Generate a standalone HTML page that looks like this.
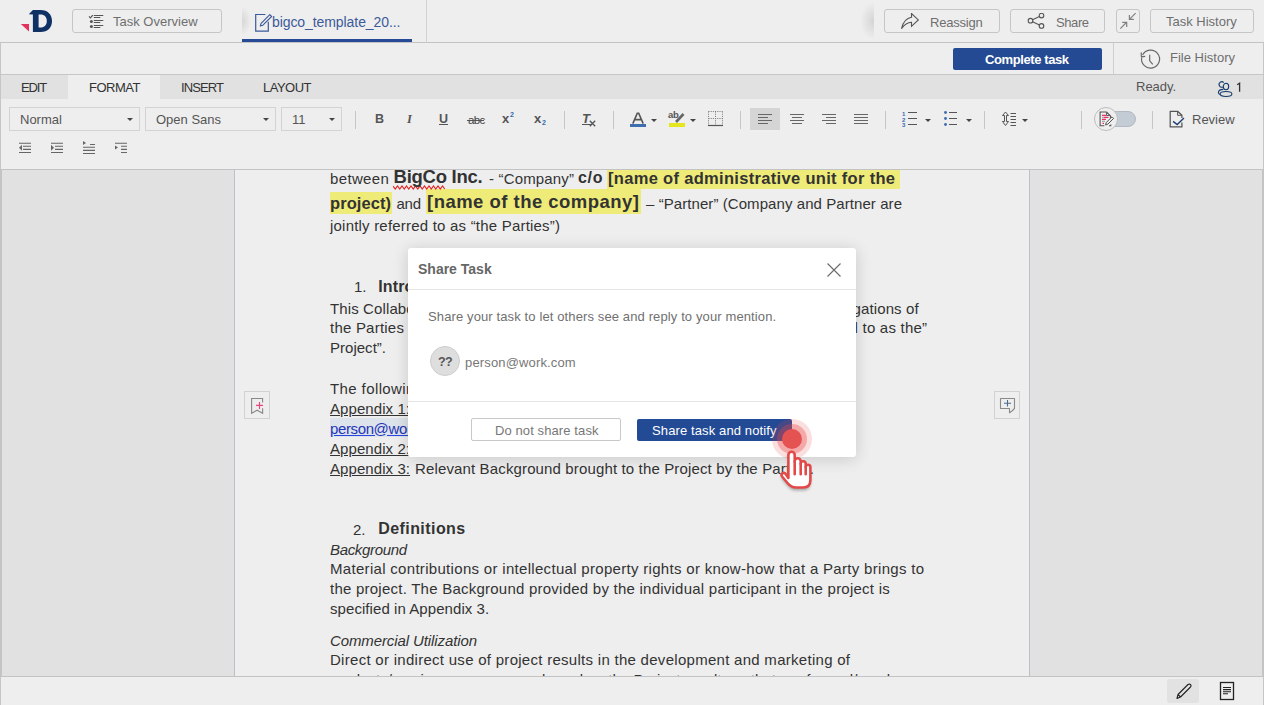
<!DOCTYPE html>
<html><head><meta charset="utf-8"><title>Task</title><style>
*{box-sizing:border-box;margin:0;padding:0}
html,body{width:1264px;height:705px;overflow:hidden;background:#eeeeee;font-family:"Liberation Sans",sans-serif;color:#333}
body{position:relative}
.a{position:absolute}
.hl{background:#c9c9c9}
.btn{position:absolute;border:1px solid #c6c6c6;border-radius:3px;background:#eeeeee}
.ui{position:absolute;white-space:nowrap;font-size:13px;color:#6e6e6e;line-height:16px}
.tab{position:absolute;top:75px;height:24px;font-size:13px;color:#333;line-height:24px;white-space:nowrap}
.dd{position:absolute;top:107px;height:24px;border:1px solid #d3d3d3;background:#eeeeee;font-size:13px;color:#555;line-height:24px;padding-left:10px;white-space:nowrap}
.dd i{position:absolute;right:6px;top:10px;width:0;height:0;border-left:3px solid transparent;border-right:3px solid transparent;border-top:3px solid #444}
.sep{position:absolute;top:111px;width:1px;height:18px;background:#c6c6c6}
.car{position:absolute;width:0;height:0;border-left:3px solid transparent;border-right:3px solid transparent;border-top:3px solid #444;top:119px}
.dt{position:absolute;white-space:nowrap;line-height:1;color:#333}
.ln{position:absolute;left:330px;white-space:nowrap;font-size:15px;line-height:20px;color:#333}
</style></head><body>

<!-- ===== HEADER ===== -->
<div class="a" style="left:0;top:42px;width:1264px;height:1px;background:#c3c3c3"></div>

<!-- logo -->
<svg class="a" style="left:18px;top:8px" width="36" height="28" viewBox="0 0 36 28">
  <path d="M2.8 16 L11 16 L11 23.5 Z" fill="#e0325a"/>
  <path fill-rule="evenodd" d="M10.8 6.2 L14.9 2 L22.5 2 C30 2 34 6.8 34 13 C34 19.5 30 24 22.5 24 L14.9 24 L14.9 6.4 Z M20.6 6.4 L22.5 6.4 C26.5 6.4 28.8 9 28.8 12.9 C28.8 16.8 26.5 19.4 22.5 19.4 L20.6 19.4 Z" fill="#0f3163"/>
</svg>

<!-- Task overview -->
<div class="btn" style="left:72px;top:9px;width:150px;height:24px"></div>
<svg class="a" style="left:84px;top:10px" width="24" height="22" viewBox="0 0 24 22">
  <path d="M5 6.4 L6.4 7.8 L8.8 5.1" stroke="#555" stroke-width="1.2" fill="none"/>
  <circle cx="7.4" cy="11.6" r="1.5" fill="#555"/><circle cx="7.4" cy="16.6" r="1.5" fill="#555"/>
  <path d="M10.2 5.5 L18.9 5.5 M10.2 10.5 L18.9 10.5 M10.2 15.5 L18.9 15.5 M10.2 7.5 L15.9 7.5 M10.2 12.5 L15.9 12.5 M10.2 17.5 L15.9 17.5" stroke="#555" stroke-width="1.05" stroke-linecap="round"/>
</svg>
<div class="ui" style="left:113px;top:14px">Task Overview</div>

<!-- active doc tab -->
<div class="a" style="left:242px;top:0;width:20px;height:42px;background:radial-gradient(9px 15px at 0px 21px,rgba(0,0,0,0.1),rgba(0,0,0,0))"></div>
<svg class="a" style="left:254px;top:13px" width="20" height="20" viewBox="0 0 20 20">
  <path d="M11.4 1.5 L1.7 1.5 L1.7 18.2 L14.3 18.2 L14.3 8.8" stroke="#3b5a9a" stroke-width="1.2" fill="none"/>
  <path d="M6.3 13 L7.1 10.4 L15.8 1.7 L17.6 3.5 L8.9 12.2 Z" stroke="#3b5a9a" stroke-width="1.1" fill="none" stroke-linejoin="round"/>
</svg>
<div class="ui" style="left:272px;top:14px;color:#3b5a9a;font-size:14px;letter-spacing:-0.08px">bigco_template_20...</div>
<div class="a" style="left:242px;top:39px;width:170px;height:3px;background:#264a95"></div>
<div class="a" style="left:426px;top:0;width:1px;height:42px;background:#d2d2d2"></div>

<!-- right header section -->
<div class="a" style="left:850px;top:0;width:24px;height:42px;background:radial-gradient(14px 19px at 24px 21px,rgba(0,0,0,0.11),rgba(0,0,0,0))"></div>
<div class="btn" style="left:884px;top:9px;width:116px;height:24px"></div>
<svg class="a" style="left:900px;top:13px" width="20" height="17" viewBox="0 0 20 17">
  <path d="M1.5 15.6 C3 9 6.5 5 11.5 4.2 L11.5 0.5 L18.3 6.9 L11.5 13.3 L11.5 9.3 C7.5 9.5 4.5 11.5 1.5 15.6 Z" stroke="#555" stroke-width="1.1" fill="none" stroke-linejoin="miter"/>
</svg>
<div class="ui" style="left:930px;top:15px;letter-spacing:-0.2px">Reassign</div>

<div class="btn" style="left:1010px;top:9px;width:95px;height:24px"></div>
<svg class="a" style="left:1027px;top:13px" width="18" height="17" viewBox="0 0 18 17">
  <circle cx="3.5" cy="7.7" r="2.3" stroke="#555" stroke-width="1.1" fill="none"/>
  <circle cx="14.5" cy="2.6" r="2.3" stroke="#555" stroke-width="1.1" fill="none"/>
  <circle cx="14.5" cy="12.9" r="2.3" stroke="#555" stroke-width="1.1" fill="none"/>
  <path d="M5.6 6.7 L12.4 3.6 M5.6 8.8 L12.4 11.9" stroke="#555" stroke-width="1.1"/>
</svg>
<div class="ui" style="left:1056px;top:15px;letter-spacing:-0.4px">Share</div>

<div class="btn" style="left:1116px;top:9px;width:24px;height:24px"></div>
<svg class="a" style="left:1119px;top:12px" width="18" height="18" viewBox="0 0 18 18">
  <path d="M1.3 16.6 L7.7 10.3 M3.2 10.4 L7.7 10.4 L7.7 14.9 M16.6 1.1 L10.4 7.4 M10.4 2.9 L10.4 7.4 L14.9 7.4" stroke="#808080" stroke-width="1.2" fill="none"/>
</svg>

<div class="btn" style="left:1150px;top:9px;width:104px;height:24px"></div>
<div class="ui" style="left:1166px;top:14px">Task History</div>

<!-- ===== ROW 2 ===== -->
<div class="a" style="left:0;top:43px;width:1px;height:662px;background:#c6c6c6"></div>
<div class="a" style="left:1263px;top:43px;width:1px;height:662px;background:#c6c6c6"></div>
<div class="a" style="left:953px;top:48px;width:149px;height:22px;background:#244a93;border-radius:2px"></div>
<div class="ui" style="left:985px;top:52px;color:#fff;font-weight:bold;font-size:13px;letter-spacing:-0.4px">Complete task</div>
<div class="a" style="left:1113px;top:43px;width:1px;height:31px;background:#cfcfcf"></div>
<svg class="a" style="left:1138px;top:47px" width="24" height="24" viewBox="0 0 24 24">
  <path d="M4.6 7.9 A9 9 0 1 1 3.7 10.5" stroke="#666" stroke-width="1.15" fill="none"/>
  <path d="M3.2 5.4 L3.4 9.9 L7.2 9.4" stroke="#666" stroke-width="1.15" fill="none"/>
  <path d="M11.7 7.7 L11.7 13.8 L14.8 17.3" stroke="#666" stroke-width="1.15" fill="none"/>
</svg>
<div class="ui" style="left:1170px;top:50px">File History</div>
<div class="a" style="left:0;top:74px;width:1264px;height:1px;background:#c6c6c6"></div>

<!-- ===== TABS ROW ===== -->
<div class="a" style="left:1px;top:75px;width:1262px;height:24px;background:#e1e1e1"></div>
<div class="a" style="left:68px;top:75px;width:92px;height:24px;background:#eeeeee"></div>
<div class="tab" style="left:21px;top:76px;letter-spacing:-1.1px">EDIT</div>
<div class="tab" style="left:89px;top:76px;letter-spacing:-0.5px">FORMAT</div>
<div class="tab" style="left:181px;top:76px;letter-spacing:-0.9px">INSERT</div>
<div class="tab" style="left:263px;top:76px;letter-spacing:-0.5px">LAYOUT</div>
<div class="tab" style="left:1136px;color:#555">Ready.</div>
<svg class="a" style="left:1215px;top:80px" width="28" height="18" viewBox="0 0 28 18">
  <ellipse cx="11" cy="6.5" rx="2.7" ry="3.2" stroke="#143c6a" stroke-width="1.1" fill="none"/>
  <ellipse cx="11" cy="14" rx="5.9" ry="2.5" stroke="#143c6a" stroke-width="1.1" fill="none"/>
  <path d="M8.7 2.6 A2.7 2.7 0 1 0 8 6.9" stroke="#143c6a" stroke-width="1.1" fill="none"/>
  <path d="M8.3 9.4 C5.5 9.6 3.4 10.6 3.4 12.4 C3.4 13.4 4 14 5.3 14.6" stroke="#143c6a" stroke-width="1.1" fill="none"/>
  <path d="M22.2 4.8 L24.6 3.2 L24.6 11.8" stroke="#333" stroke-width="1.3" fill="none"/>
</svg>


<!-- ===== TOOLBAR ===== -->
<div class="dd" style="left:9px;width:131px">Normal<i></i></div>
<div class="dd" style="left:145px;width:131px">Open Sans<i></i></div>
<div class="dd" style="left:281px;width:61px">11<i></i></div>

<!-- separators -->
<div class="sep" style="left:355px"></div>
<div class="sep" style="left:564px"></div>
<div class="sep" style="left:613px"></div>
<div class="sep" style="left:740px"></div>
<div class="sep" style="left:885px"></div>
<div class="sep" style="left:984px"></div>
<div class="sep" style="left:1081px"></div>
<div class="sep" style="left:1152px"></div>
<!-- B I U abc x2 x2 -->
<div class="a" style="left:375px;top:111px;font:bold 12.5px/16px 'Liberation Sans',sans-serif;color:#555">B</div>
<div class="a" style="left:407px;top:111px;font:bold italic 12.5px/16px 'Liberation Serif',serif;color:#555">I</div>
<div class="a" style="left:439px;top:111px;font:bold 12.5px/16px 'Liberation Sans',sans-serif;color:#555;text-decoration:underline">U</div>
<div class="a" style="left:468px;top:112px;font:11.5px/16px 'Liberation Sans',sans-serif;color:#444;letter-spacing:-0.6px">abc</div>
<div class="a" style="left:467px;top:120px;width:17px;height:1px;background:#555"></div>
<div class="a" style="left:502px;top:111px;font:bold 13px/16px 'Liberation Sans',sans-serif;color:#555">x</div>
<div class="a" style="left:510px;top:110px;font:bold 7px/10px 'Liberation Sans',sans-serif;color:#3a6ab0">2</div>
<div class="a" style="left:534px;top:111px;font:bold 13px/16px 'Liberation Sans',sans-serif;color:#555">x</div>
<div class="a" style="left:542px;top:118px;font:bold 7px/10px 'Liberation Sans',sans-serif;color:#3a6ab0">2</div>
<!-- Tx -->
<div class="a" style="left:582px;top:111px;font:bold italic 13px/16px 'Liberation Sans',sans-serif;color:#555">T</div>
<div class="a" style="left:582px;top:124px;width:9px;height:1px;background:#555"></div>
<svg class="a" style="left:589px;top:120px" width="7" height="7" viewBox="0 0 7 7"><path d="M0.8 0.8 L6.2 6.2 M6.2 0.8 L0.8 6.2" stroke="#555" stroke-width="1.3"/></svg>
<!-- font color A -->
<svg class="a" style="left:629px;top:112px" width="18" height="16" viewBox="0 0 18 16">
  <path d="M3.8 11.6 L8.3 1.2 L9.7 1.2 L14.2 11.6 M5.6 7.6 L12.4 7.6" stroke="#555" stroke-width="1.6" fill="none"/>
  <rect x="1" y="12" width="16" height="3" fill="#3d6eaf"/>
</svg>
<div class="car" style="left:651px"></div>
<!-- highlight -->
<svg class="a" style="left:668px;top:111px" width="18" height="17" viewBox="0 0 18 17">
  
  <path d="M8 11 L15.5 3" stroke="#666" stroke-width="2.6"/>
  <rect x="1" y="12" width="16" height="4" fill="#e6e61c"/>
</svg>
<div class="a" style="left:668px;top:110px;font:bold 9.5px/10px 'Liberation Sans',sans-serif;color:#555;letter-spacing:-0.3px">ab</div>
<div class="car" style="left:690px"></div>
<!-- borders -->
<svg class="a" style="left:707px;top:110px" width="17" height="17" viewBox="0 0 17 17">
  <path d="M1.5 1.5 L15.5 1.5 M1.5 1.5 L1.5 15 M15.5 1.5 L15.5 15 M8.5 1.5 L8.5 15 M1.5 8.5 L15.5 8.5" stroke="#777" stroke-width="1" stroke-dasharray="1 1.2" fill="none"/>
  <path d="M1 15.5 L16 15.5" stroke="#555" stroke-width="1.2"/>
</svg>
<!-- align -->
<div class="a" style="left:750px;top:108px;width:30px;height:22px;background:#d5d5d5"></div>
<svg class="a" style="left:757px;top:113px" width="16" height="12" viewBox="0 0 16 12">
  <path d="M1 1.5 L15 1.5 M1 4.5 L11 4.5 M1 7.5 L15 7.5 M1 10.5 L11 10.5" stroke="#666" stroke-width="1.1"/>
</svg>
<svg class="a" style="left:789px;top:113px" width="16" height="12" viewBox="0 0 16 12">
  <path d="M1 1.5 L15 1.5 M3 4.5 L13 4.5 M1 7.5 L15 7.5 M3 10.5 L13 10.5" stroke="#666" stroke-width="1.1"/>
</svg>
<svg class="a" style="left:821px;top:113px" width="16" height="12" viewBox="0 0 16 12">
  <path d="M1 1.5 L15 1.5 M5 4.5 L15 4.5 M1 7.5 L15 7.5 M5 10.5 L15 10.5" stroke="#666" stroke-width="1.1"/>
</svg>
<svg class="a" style="left:853px;top:113px" width="16" height="12" viewBox="0 0 16 12">
  <path d="M1 1.5 L15 1.5 M1 4.5 L15 4.5 M1 7.5 L15 7.5 M1 10.5 L15 10.5" stroke="#666" stroke-width="1.1"/>
</svg>
<!-- numbered list -->
<svg class="a" style="left:901px;top:110px" width="18" height="17" viewBox="0 0 18 17">
  <text x="1" y="6" style="font-family:'Liberation Sans',sans-serif;font-size:6px;font-weight:bold" fill="#3a6ab0">1</text>
  <text x="1" y="11.5" style="font-family:'Liberation Sans',sans-serif;font-size:6px;font-weight:bold" fill="#3a6ab0">2</text>
  <text x="1" y="17" style="font-family:'Liberation Sans',sans-serif;font-size:6px;font-weight:bold" fill="#3a6ab0">3</text>
  <path d="M7 2.5 L16 2.5 M7 8.5 L16 8.5 M7 14.5 L16 14.5" stroke="#555" stroke-width="1.1"/>
</svg>
<div class="car" style="left:925px"></div>
<!-- bullet list -->
<svg class="a" style="left:943px;top:110px" width="16" height="17" viewBox="0 0 16 17">
  <circle cx="2.5" cy="2.5" r="1.4" fill="#3a6ab0"/><circle cx="2.5" cy="8.5" r="1.4" fill="#3a6ab0"/><circle cx="2.5" cy="14.5" r="1.4" fill="#3a6ab0"/>
  <path d="M6 2.5 L14 2.5 M6 8.5 L14 8.5 M6 14.5 L14 14.5" stroke="#555" stroke-width="1.1"/>
</svg>
<div class="car" style="left:966px"></div>
<!-- line spacing -->
<svg class="a" style="left:1001px;top:111px" width="17" height="16" viewBox="0 0 17 16">
  <path d="M4.5 1 L1.5 4.5 L3.5 4.5 L3.5 10.5 L1.5 10.5 L4.5 14.5 L7.5 10.5 L5.5 10.5 L5.5 4.5 L7.5 4.5 Z" stroke="#555" stroke-width="1" fill="none"/>
  <path d="M9.5 2.5 L15 2.5 M9.5 5.5 L15 5.5 M9.5 8.5 L15 8.5 M9.5 11.5 L15 11.5 M9.5 14.5 L15 14.5" stroke="#555" stroke-width="1"/>
</svg>
<div class="car" style="left:1022px"></div>
<!-- track changes toggle -->
<div class="a" style="left:1100px;top:111px;width:36px;height:16px;border-radius:8px;background:#c3cbd4;border:1px solid #b3b9c0"></div>
<div class="a" style="left:1094px;top:107px;width:24px;height:24px;border-radius:12px;background:#eeeeee;border:1px solid #bdbdbd"></div>
<svg class="a" style="left:1098px;top:110px" width="18" height="18" viewBox="0 0 18 18">
  <path d="M8.5 2 L2.1 2 L2.1 15.8 L6.3 15.8 M8.5 2 L12.5 6 L12.5 8 M11 15.8 L12.8 15.8 L12.8 14.5" stroke="#555" stroke-width="1.1" fill="none"/>
  <path d="M8.5 2.5 L8.5 5.5 L11.5 5.5" stroke="#555" stroke-width="0.9" fill="none"/>
  <path d="M4 5.3 L8 5.3 M6 7.3 L10.5 7.3 M4 9.3 L8 9.3 M4.5 13.4 L6 13.4" stroke="#e8336a" stroke-width="1.2"/>
  <path d="M4 7.3 L6 7.3 M4 11.3 L7 11.3" stroke="#999" stroke-width="1"/>
  <path d="M7.6 15 L8.2 12.6 L14 6.8 L15.6 8.4 L9.8 14.2 Z" stroke="#555" stroke-width="1" fill="#eee"/>
</svg>
<!-- review -->
<svg class="a" style="left:1168px;top:109px" width="18" height="20" viewBox="0 0 18 20">
  <path d="M13.9 9 L13.9 6.3 L9.6 2.3 L2.2 2.3 L2.2 17.9 L13.9 17.9 L13.9 13.5" stroke="#555" stroke-width="1.25" fill="none" stroke-linejoin="round"/>
  <path d="M9.6 2.6 L9.6 6.3 L13.6 6.3" stroke="#555" stroke-width="1" fill="none"/>
  <path d="M5.1 12.4 L9.2 15.6 L16 9.1" stroke="#1d3f73" stroke-width="1.35" fill="none"/>
</svg>
<div class="ui" style="left:1192px;top:112px;font-size:13px;color:#555">Review</div>
<!-- row 2 indent icons -->
<svg class="a" style="left:18px;top:142px" width="14" height="12" viewBox="0 0 14 12">
  <path d="M1 1.2 L13 1.2 M5 4.3 L13 4.3 M5 7.4 L13 7.4 M1 10.5 L13 10.5" stroke="#666" stroke-width="1.1"/>
  <path d="M4 2.8 L1 5.8 L4 8.8 Z" fill="#666"/>
</svg>
<svg class="a" style="left:50px;top:142px" width="14" height="12" viewBox="0 0 14 12">
  <path d="M1 1.2 L13 1.2 M5 4.3 L13 4.3 M5 7.4 L13 7.4 M1 10.5 L13 10.5" stroke="#666" stroke-width="1.1"/>
  <path d="M1 2.8 L4 5.8 L1 8.8 Z" fill="#666"/>
</svg>
<svg class="a" style="left:82px;top:140px" width="14" height="15" viewBox="0 0 14 15">
  <path d="M8 4.5 L13 4.5 M1 7.3 L13 7.3 M1 10.4 L13 10.4 M1 13.5 L13 13.5" stroke="#666" stroke-width="1.1"/>
  <path d="M1 1 L4 3 L1 5 Z" fill="#666"/>
</svg>
<svg class="a" style="left:114px;top:142px" width="14" height="12" viewBox="0 0 14 12">
  <path d="M1 1.2 L13 1.2 M7 4.3 L13 4.3 M7 7.4 L13 7.4 M7 10.5 L13 10.5" stroke="#666" stroke-width="1.1"/>
  <path d="M1 3.5 L4 5.5 L1 7.5 Z" fill="#666"/>
</svg>


<div class="a" style="left:0;top:169px;width:1264px;height:1px;background:#c3c3c3"></div>

<!-- ===== DOC AREA ===== -->
<div class="a" style="left:1px;top:170px;width:1262px;height:506px;background:#e1e1e1"></div>
<div class="a" style="left:0;top:170px;width:2px;height:506px;background:#c4c4c4"></div>
<div class="a" style="left:1262px;top:170px;width:2px;height:506px;background:#c4c4c4"></div>
<div class="a" style="left:234px;top:170px;width:796px;height:506px;background:#eeeeee;border-left:1px solid #b7c2cb;border-right:1px solid #b7c2cb"></div>

<div class="a" style="left:234px;top:170px;width:796px;height:506px;overflow:hidden">
<div class="a" style="left:372.7px;top:0;width:293.3px;height:19px;background:#efeb78"></div>
<div class="a" style="left:96px;top:22px;width:62px;height:21.7px;background:#efeb78"></div>
<div class="a" style="left:192px;top:19px;width:215px;height:24.7px;background:#efeb78"></div>
<div class="a" style="left:96px;top:248px;width:100px;height:19px;background:#dde3ea"></div>
<svg class="a" style="left:159px;top:15px" width="54" height="6" viewBox="0 0 54 6"><path d="M0 1 L0.00 1 L2.25 4 L4.50 1 L6.75 4 L9.00 1 L11.25 4 L13.50 1 L15.75 4 L18.00 1 L20.25 4 L22.50 1 L24.75 4 L27.00 1 L29.25 4 L31.50 1 L33.75 4 L36.00 1 L38.25 4 L40.50 1 L42.75 4 L45.00 1 L47.25 4 L49.50 1 L51.75 4" stroke="#e02424" stroke-width="1.2" fill="none"/></svg>
<div style="position:absolute;left:-234px;top:-170px;width:1264px;height:705px">
<!--DOCTEXT-->
<div class="dt" style="left:330.0px;top:171.0px;font-size:15px;letter-spacing:0.348px;">between</div>
<div class="dt" style="left:393.6px;top:168.0px;font-size:18.5px;font-weight:bold;letter-spacing:-0.274px;">BigCo Inc.</div>
<div class="dt" style="left:489.0px;top:171.0px;font-size:15px;letter-spacing:0.165px;">- “Company”</div>
<div class="dt" style="left:578.0px;top:170.2px;font-size:16px;font-weight:bold;letter-spacing:0.691px;">c/o</div>
<div class="dt" style="left:608.0px;top:169.7px;font-size:16.5px;font-weight:bold;letter-spacing:0.316px;">[name of administrative unit for the</div>
<div class="dt" style="left:330.0px;top:194.7px;font-size:16.5px;font-weight:bold;letter-spacing:0.071px;">project)</div>
<div class="dt" style="left:396.4px;top:196.0px;font-size:15px;letter-spacing:-0.213px;">and</div>
<div class="dt" style="left:427.0px;top:193.0px;font-size:18.5px;font-weight:bold;letter-spacing:0.475px;">[name of the company]</div>
<div class="dt" style="left:646.0px;top:196.0px;font-size:15px;letter-spacing:0.073px;">– “Partner” (Company and Partner are</div>
<div class="dt" style="left:330.0px;top:217.9px;font-size:15px;letter-spacing:0.206px;">jointly referred to as “the Parties”)</div>
<div class="dt" style="left:354.0px;top:279.3px;font-size:15px;letter-spacing:0.000px;">1.</div>
<div class="dt" style="left:378.2px;top:278.5px;font-size:16px;font-weight:bold;letter-spacing:0.153px;">Introduction</div>
<div class="dt" style="left:330.0px;top:300.6px;font-size:15px;letter-spacing:0.116px;">This Collaboration Agreement (“Agreement”) sets out the basic rights and obligations of</div>
<div class="dt" style="left:330.0px;top:320.4px;font-size:15px;letter-spacing:0.218px;">the Parties in relation to the project [name of the project] (hereinafter referred to as the”</div>
<div class="dt" style="left:330.0px;top:340.3px;font-size:15px;letter-spacing:0.019px;">Project”.</div>
<div class="dt" style="left:330.0px;top:380.7px;font-size:15px;letter-spacing:0.397px;">The following appendices form part of this Agreement:</div>
<div class="dt" style="left:330.0px;top:400.7px;font-size:15px;letter-spacing:0.077px;text-decoration:underline">Appendix 1:</div>
<div class="dt" style="left:330.0px;top:420.5px;font-size:15px;letter-spacing:-0.376px;color:#2436b8;text-decoration:underline;text-decoration-color:#2a45e0">person@work.com</div>
<div class="dt" style="left:330.0px;top:440.7px;font-size:15px;letter-spacing:0.077px;text-decoration:underline">Appendix 2:</div>
<div class="dt" style="left:330.0px;top:460.7px;font-size:15px;letter-spacing:0.077px;text-decoration:underline">Appendix 3:</div>
<div class="dt" style="left:415.0px;top:460.7px;font-size:15px;letter-spacing:0.139px;">Relevant Background brought to the Project by the Parties.</div>
<div class="dt" style="left:353.0px;top:522.0px;font-size:15px;letter-spacing:0.000px;">2.</div>
<div class="dt" style="left:378.2px;top:521.2px;font-size:16px;font-weight:bold;letter-spacing:0.434px;">Definitions</div>
<div class="dt" style="left:330.0px;top:541.8px;font-size:15px;font-style:italic;letter-spacing:-0.339px;">Background</div>
<div class="dt" style="left:330.0px;top:561.1px;font-size:15px;letter-spacing:0.308px;">Material contributions or intellectual property rights or know-how that a Party brings to</div>
<div class="dt" style="left:330.0px;top:580.9px;font-size:15px;letter-spacing:0.237px;">the project. The Background provided by the individual participant in the project is</div>
<div class="dt" style="left:330.0px;top:600.8px;font-size:15px;letter-spacing:0.068px;">specified in Appendix 3.</div>
<div class="dt" style="left:330.0px;top:632.5px;font-size:15px;font-style:italic;letter-spacing:-0.105px;">Commercial Utilization</div>
<div class="dt" style="left:330.0px;top:652.0px;font-size:15px;letter-spacing:0.282px;">Direct or indirect use of project results in the development and marketing of</div>
<div class="dt" style="left:330.0px;top:672.0px;font-size:15px;letter-spacing:0.037px;">products/services or processes based on the Project results or that are formed/used</div>
<!--/DOCTEXT--></div>
</div>
<!-- bookmark / comment buttons -->
<div class="a" style="left:244px;top:391px;width:26px;height:28px;border:1px solid #d2d2d2"></div>
<svg class="a" style="left:248px;top:396px" width="16" height="20" viewBox="0 0 16 20">
  <path d="M14.6 6.5 L14.6 2.5 L3.6 2.5 L3.6 17.3 L9.1 14.2 L14.6 17.3 L14.6 12.3" stroke="#8a8a8a" stroke-width="1.15" fill="none"/>
  <path d="M8 9.4 L15 9.4 M11.5 5.9 L11.5 12.9" stroke="#e8457a" stroke-width="1.15"/>
</svg>
<div class="a" style="left:994px;top:391px;width:26px;height:28px;border:1px solid #d2d2d2"></div>
<svg class="a" style="left:999px;top:397px" width="17" height="17" viewBox="0 0 17 17">
  <path d="M1.5 1.5 L15.5 1.5 L15.5 11.5 L13 14 L10.5 15.8 L10.5 11.5 L1.5 11.5 Z" stroke="#8a8a8a" stroke-width="1.1" fill="none" stroke-linejoin="round"/>
  <path d="M5 6.3 L12 6.3 M8.5 3 L8.5 9.5" stroke="#4a6a94" stroke-width="1.1"/>
</svg>
<!-- status bar icons -->
<div class="a" style="left:1167px;top:679px;width:32px;height:24px;border-radius:3px;background:#e2e2e2"></div>
<svg class="a" style="left:1175px;top:683px" width="18" height="17" viewBox="0 0 18 17">
  <path d="M2 15.5 L3 11.5 L13 1.5 Q14.5 0.6 15.6 1.6 Q16.5 2.7 15.5 4 L5.5 14 Z M3 11.5 L5.5 14" stroke="#222" stroke-width="1.1" fill="none" stroke-linejoin="round"/>
</svg>
<svg class="a" style="left:1219px;top:681px" width="16" height="20" viewBox="0 0 16 20">
  <rect x="1.5" y="1.5" width="13" height="17" stroke="#222" stroke-width="1.3" fill="none"/>
  <path d="M4 6.5 L12 6.5 M4 8.6 L12 8.6 M4 10.7 L12 10.7 M4 12.8 L9 12.8" stroke="#222" stroke-width="1.1"/>
</svg>


<!-- ===== STATUS BAR ===== -->
<div class="a" style="left:0;top:676px;width:1264px;height:1px;background:#c3c3c3"></div>

<!-- ===== MODAL ===== -->
<div class="a" style="left:408px;top:248px;width:448px;height:209px;background:#fff;border-radius:3px;box-shadow:0 2px 16px rgba(0,0,0,0.16)"></div>
<div class="ui" style="left:418px;top:261px;font-weight:bold;font-size:14px;color:#666">Share Task</div>
<svg class="a" style="left:826px;top:262px" width="16" height="16" viewBox="0 0 16 16"><path d="M1.5 1.5 L14.5 14.5 M14.5 1.5 L1.5 14.5" stroke="#6e6e6e" stroke-width="1.2"/></svg>
<div class="a" style="left:408px;top:289px;width:448px;height:1px;background:#e6e6e6"></div>
<div class="ui" style="left:428px;top:309px;font-size:13px;color:#707070;letter-spacing:0.12px">Share your task to let others see and reply to your mention.</div>
<div class="a" style="left:430px;top:346px;width:30px;height:30px;border-radius:15px;background:#dedede;border:1px solid #cdcdcd"></div>
<div class="ui" style="left:438px;top:354px;font-weight:bold;font-size:12.5px;color:#555;letter-spacing:-0.6px">??</div>
<div class="ui" style="left:465px;top:355px;font-size:13px;color:#777;letter-spacing:0.15px">person@work.com</div>
<div class="a" style="left:408px;top:401px;width:448px;height:1px;background:#e6e6e6"></div>
<div class="a" style="left:471px;top:418px;width:150px;height:23px;border:1px solid #c8c8c8;border-radius:2px;background:#fff"></div>
<div class="ui" style="left:495px;top:423px;font-size:13px;color:#777;letter-spacing:0.1px">Do not share task</div>
<div class="a" style="left:637px;top:419px;width:155px;height:22px;background:#234a94;border-radius:2px"></div>
<div class="ui" style="left:652px;top:423px;font-size:13px;color:#fff;letter-spacing:0.12px">Share task and notify</div>
<!-- click ripple -->
<div class="a" style="left:772px;top:419px;width:40px;height:40px;border-radius:20px;background:rgba(232,70,70,0.18)"></div>
<div class="a" style="left:777px;top:424px;width:30px;height:30px;border-radius:15px;background:rgba(232,70,70,0.35)"></div>
<div class="a" style="left:782px;top:429px;width:20px;height:20px;border-radius:10px;background:#e55252"></div>
<!-- hand cursor -->
<svg class="a" style="left:776px;top:446px" width="44" height="50" viewBox="0 0 44 50">
  <defs><filter id="hs" x="-30%" y="-30%" width="160%" height="160%"><feGaussianBlur stdDeviation="1.8"/></filter></defs>
  <path d="M12.4 32 L12.4 8.95 A3.15 3.15 0 0 1 18.7 8.95 L18.7 15.3 A3 3 0 0 1 24.7 15.3 L24.7 17.7 A2.5 2.5 0 0 1 29.7 17.7 L29.7 21.05 A2.35 2.35 0 0 1 34.4 21.05 L34.4 34 C34.4 39 31.5 41.5 27 41.5 L20 41.5 C16.5 41.5 14 40 11.5 37 L6 30.5 C4.5 28.5 7 25.5 9.3 27.5 Z" fill="rgba(0,0,0,0.3)" filter="url(#hs)" transform="translate(0,3)"/>
  <path d="M12.4 32 L12.4 8.95 A3.15 3.15 0 0 1 18.7 8.95 L18.7 15.3 A3 3 0 0 1 24.7 15.3 L24.7 17.7 A2.5 2.5 0 0 1 29.7 17.7 L29.7 21.05 A2.35 2.35 0 0 1 34.4 21.05 L34.4 34 C34.4 39 31.5 41.5 27 41.5 L20 41.5 C16.5 41.5 14 40 11.5 37 L6 30.5 C4.5 28.5 7 25.5 9.3 27.5 Z" fill="#fff" stroke="#e24a4a" stroke-width="2.6" stroke-linejoin="round"/>
  <path d="M18.7 15.3 L18.7 28.3 M24.7 17.7 L24.7 28.3 M29.7 21.05 L29.7 28.3" stroke="#e24a4a" stroke-width="2.6" stroke-linecap="round"/>
</svg>


</body></html>
